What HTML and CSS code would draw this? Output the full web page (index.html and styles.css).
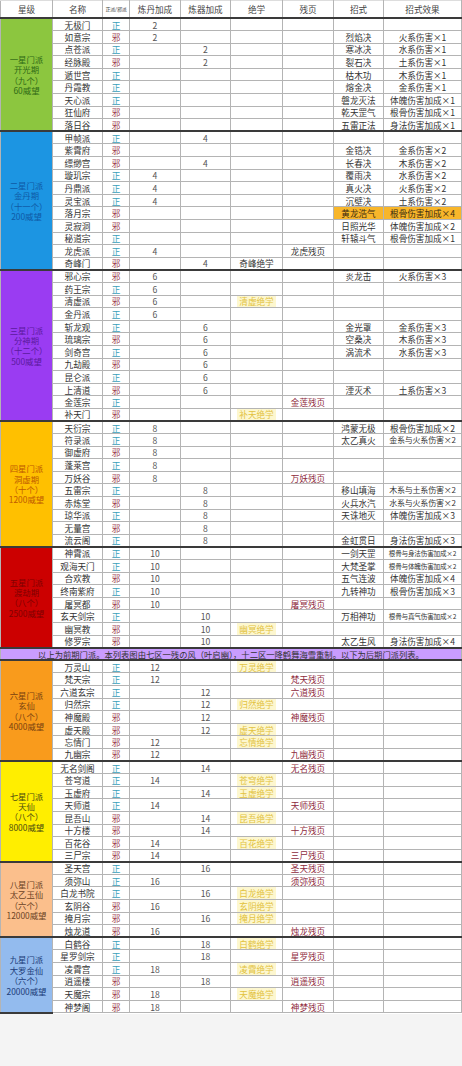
FILE: index.html
```html
<!DOCTYPE html>
<html lang="zh-CN">
<head>
<meta charset="utf-8">
<title>门派列表</title>
<link rel="stylesheet" href="styles.css">
</head>
<body>
<table class="sect">
<colgroup>
<col class="c1"><col class="c2"><col class="c3"><col class="c4"><col class="c5"><col class="c6"><col class="c7"><col class="c8"><col class="c9">
</colgroup>
<thead>
<tr class="head"><th>星级</th><th>名称</th><th class="tiny">正派/邪派</th><th>炼丹加成</th><th>炼器加成</th><th>绝学</th><th>残页</th><th>招式</th><th>招式效果</th></tr>
</thead>
<tbody>
<tr class="g"><td class="lv l1" rowspan="9"><div class="lab">一星门派<br>开光期<br>（九个）<br>60威望</div></td><td>无极门</td><td class="z">正</td><td class="n">2</td><td></td><td></td><td></td><td></td><td></td></tr>
<tr><td>如意宗</td><td class="x">邪</td><td class="n">2</td><td></td><td></td><td></td><td>烈焰决</td><td>火系伤害×1</td></tr>
<tr><td>点苍派</td><td class="z">正</td><td></td><td class="n">2</td><td></td><td></td><td>寒冰决</td><td>水系伤害×1</td></tr>
<tr><td>经脉殿</td><td class="x">邪</td><td></td><td class="n">2</td><td></td><td></td><td>裂石决</td><td>土系伤害×1</td></tr>
<tr><td>遁世宫</td><td class="z">正</td><td></td><td></td><td></td><td></td><td>枯木功</td><td>木系伤害×1</td></tr>
<tr><td>丹霞教</td><td class="z">正</td><td></td><td></td><td></td><td></td><td>熔金决</td><td>金系伤害×1</td></tr>
<tr><td>天心派</td><td class="z">正</td><td></td><td></td><td></td><td></td><td>磐龙灭法</td><td>体魄伤害加成×1</td></tr>
<tr><td>狂仙府</td><td class="x">邪</td><td></td><td></td><td></td><td></td><td>乾天罡气</td><td>根骨伤害加成×1</td></tr>
<tr><td>落日谷</td><td class="x">邪</td><td></td><td></td><td></td><td></td><td>五雷正法</td><td>身法伤害加成×1</td></tr>

<tr class="g"><td class="lv l2" rowspan="11"><div class="lab">二星门派<br>金丹期<br>（十一个）<br>200威望</div></td><td>甲帧派</td><td class="z">正</td><td></td><td class="n">4</td><td></td><td></td><td></td><td></td></tr>
<tr><td>紫霄府</td><td class="x">邪</td><td></td><td></td><td></td><td></td><td>金锆决</td><td>金系伤害×2</td></tr>
<tr><td>缥缈宫</td><td class="x">邪</td><td></td><td class="n">4</td><td></td><td></td><td>长春决</td><td>木系伤害×2</td></tr>
<tr><td>璇玑宗</td><td class="z">正</td><td class="n">4</td><td></td><td></td><td></td><td>覆雨决</td><td>水系伤害×2</td></tr>
<tr><td>丹鼎派</td><td class="z">正</td><td class="n">4</td><td></td><td></td><td></td><td>真火决</td><td>火系伤害×2</td></tr>
<tr><td>灵宝派</td><td class="z">正</td><td class="n">4</td><td></td><td></td><td></td><td>沉壁决</td><td>土系伤害×2</td></tr>
<tr><td>落月宗</td><td class="x">邪</td><td></td><td></td><td></td><td></td><td class="hl">黄龙浩气</td><td class="hl">根骨伤害加成×4</td></tr>
<tr><td>灵寂洞</td><td class="x">邪</td><td></td><td></td><td></td><td></td><td>日照光华</td><td>体魄伤害加成×2</td></tr>
<tr><td>秘道宗</td><td class="z">正</td><td></td><td></td><td></td><td></td><td>轩辕斗气</td><td>根骨伤害加成×1</td></tr>
<tr><td>龙虎派</td><td class="z">正</td><td class="n">4</td><td></td><td></td><td>龙虎残页</td><td></td><td></td></tr>
<tr><td>奇峰门</td><td class="x">邪</td><td></td><td class="n">4</td><td>奇峰绝学</td><td></td><td></td><td></td></tr>

<tr class="g"><td class="lv l3" rowspan="12"><div class="lab">三星门派<br>分神期<br>（十二个）<br>500威望</div></td><td>邪心宗</td><td class="x">邪</td><td class="n">6</td><td></td><td></td><td></td><td>炎龙击</td><td>火系伤害×3</td></tr>
<tr><td>药王宗</td><td class="z">正</td><td class="n">6</td><td></td><td></td><td></td><td></td><td></td></tr>
<tr><td>清虚派</td><td class="x">邪</td><td class="n">6</td><td></td><td><span class="jx">清虚绝学</span></td><td></td><td></td><td></td></tr>
<tr><td>金丹派</td><td class="z">正</td><td class="n">6</td><td></td><td></td><td></td><td></td><td></td></tr>
<tr><td>斩龙观</td><td class="z">正</td><td></td><td class="n">6</td><td></td><td></td><td>金光罩</td><td>金系伤害×3</td></tr>
<tr><td>琉璃宗</td><td class="x">邪</td><td></td><td class="n">6</td><td></td><td></td><td>空桑决</td><td>木系伤害×3</td></tr>
<tr><td>剑奇宫</td><td class="z">正</td><td></td><td class="n">6</td><td></td><td></td><td>涡流术</td><td>水系伤害×3</td></tr>
<tr><td>九劫殿</td><td class="x">邪</td><td></td><td class="n">6</td><td></td><td></td><td></td><td></td></tr>
<tr><td>昆仑派</td><td class="z">正</td><td></td><td class="n">6</td><td></td><td></td><td></td><td></td></tr>
<tr><td>上清道</td><td class="x">邪</td><td></td><td class="n">6</td><td></td><td></td><td>湮灭术</td><td>土系伤害×3</td></tr>
<tr><td>金莲宗</td><td class="z">正</td><td></td><td></td><td></td><td class="cy">金莲残页</td><td></td><td></td></tr>
<tr><td>补天门</td><td class="x">邪</td><td></td><td></td><td><span class="jx">补天绝学</span></td><td></td><td></td><td></td></tr>

<tr class="g"><td class="lv l4" rowspan="10"><div class="lab">四星门派<br>洞虚期<br>（十个）<br>1200威望</div></td><td>天衍宗</td><td class="z">正</td><td class="n">8</td><td></td><td></td><td></td><td>鸿蒙无极</td><td>根骨伤害加成×2</td></tr>
<tr><td>符录派</td><td class="z">正</td><td class="n">8</td><td></td><td></td><td></td><td>太乙真火</td><td class="md">金系与火系伤害×2</td></tr>
<tr><td>御虚府</td><td class="x">邪</td><td class="n">8</td><td></td><td></td><td></td><td></td><td></td></tr>
<tr><td>蓬莱宫</td><td class="z">正</td><td class="n">8</td><td></td><td></td><td></td><td></td><td></td></tr>
<tr><td>万妖谷</td><td class="x">邪</td><td class="n">8</td><td></td><td></td><td class="cy">万妖残页</td><td></td><td></td></tr>
<tr><td>五雷宗</td><td class="z">正</td><td></td><td class="n">8</td><td></td><td></td><td>移山填海</td><td class="md">木系与土系伤害×2</td></tr>
<tr><td>赤炼堂</td><td class="x">邪</td><td></td><td class="n">8</td><td></td><td></td><td>火兵水汽</td><td class="md">水系与火系伤害×2</td></tr>
<tr><td>琼华派</td><td class="z">正</td><td></td><td class="n">8</td><td></td><td></td><td>天诛地灭</td><td>体魄伤害加成×3</td></tr>
<tr><td>无量宫</td><td class="x">邪</td><td></td><td class="n">8</td><td></td><td></td><td></td><td></td></tr>
<tr><td>流云阁</td><td class="z">正</td><td></td><td class="n">8</td><td></td><td></td><td>金虹贯日</td><td>身法伤害加成×3</td></tr>

<tr class="g"><td class="lv l5" rowspan="8"><div class="lab">五星门派<br>渡劫期<br>（八个）<br>2500威望</div></td><td>神霄派</td><td class="z">正</td><td class="n">10</td><td></td><td></td><td></td><td>一剑天罡</td><td class="sm">根骨与身法伤害加成×2</td></tr>
<tr><td>观海天门</td><td class="z">正</td><td class="n">10</td><td></td><td></td><td></td><td>大梵圣掌</td><td class="sm">根骨与体魄伤害加成×2</td></tr>
<tr><td>合欢教</td><td class="x">邪</td><td class="n">10</td><td></td><td></td><td></td><td>五气连波</td><td>体魄伤害加成×4</td></tr>
<tr><td>终南紫府</td><td class="z">正</td><td class="n">10</td><td></td><td></td><td></td><td>九转神功</td><td>根骨伤害加成×3</td></tr>
<tr><td>屠冥都</td><td class="x">邪</td><td class="n">10</td><td></td><td></td><td class="cy">屠冥残页</td><td></td><td></td></tr>
<tr><td>玄天剑宗</td><td class="z">正</td><td></td><td class="n">10</td><td></td><td></td><td>万相神功</td><td class="sm">根骨与真气伤害加成×2</td></tr>
<tr><td>幽冥教</td><td class="x">邪</td><td></td><td class="n">10</td><td><span class="jx">幽冥绝学</span></td><td></td><td></td><td></td></tr>
<tr><td>修罗宗</td><td class="x">邪</td><td></td><td class="n">10</td><td></td><td></td><td>太乙生风</td><td>身法伤害加成×4</td></tr>

<tr class="g note"><td colspan="9">以上为前期门派。本列表图由七区一残の风（叶启幽），十二区一降鹤舞海雪重制。以下为后期门派列表。</td></tr>

<tr class="g"><td class="lv l6" rowspan="8"><div class="lab">六星门派<br>玄仙<br>（八个）<br>4000威望</div></td><td>万灵山</td><td class="z">正</td><td class="n">12</td><td></td><td><span class="jx">万灵绝学</span></td><td></td><td></td><td></td></tr>
<tr><td>梵天宗</td><td class="z">正</td><td class="n">12</td><td></td><td></td><td class="cy">梵天残页</td><td></td><td></td></tr>
<tr><td>六道玄宗</td><td class="z">正</td><td></td><td class="n">12</td><td></td><td class="cy">六道残页</td><td></td><td></td></tr>
<tr><td>归然宗</td><td class="z">正</td><td></td><td class="n">12</td><td><span class="jx">归然绝学</span></td><td></td><td></td><td></td></tr>
<tr><td>神魔殿</td><td class="x">邪</td><td></td><td class="n">12</td><td></td><td class="cy">神魔残页</td><td></td><td></td></tr>
<tr><td>虚天殿</td><td class="x">邪</td><td></td><td class="n">12</td><td><span class="jx">虚天绝学</span></td><td></td><td></td><td></td></tr>
<tr><td>忘情门</td><td class="x">邪</td><td class="n">12</td><td></td><td><span class="jx">忘情绝学</span></td><td></td><td></td><td></td></tr>
<tr><td>九幽宗</td><td class="x">邪</td><td class="n">12</td><td></td><td></td><td class="cy">九幽残页</td><td></td><td></td></tr>

<tr class="g"><td class="lv l7" rowspan="8"><div class="lab">七星门派<br>天仙<br>（八个）<br>8000威望</div></td><td>无名剑阁</td><td class="z">正</td><td></td><td class="n">14</td><td></td><td class="cy">无名残页</td><td></td><td></td></tr>
<tr><td>苍穹道</td><td class="z">正</td><td class="n">14</td><td></td><td><span class="jx">苍穹绝学</span></td><td></td><td></td><td></td></tr>
<tr><td>玉虚府</td><td class="z">正</td><td></td><td class="n">14</td><td><span class="jx">玉虚绝学</span></td><td></td><td></td><td></td></tr>
<tr><td>天师道</td><td class="z">正</td><td class="n">14</td><td></td><td></td><td class="cy">天师残页</td><td></td><td></td></tr>
<tr><td>昆吾山</td><td class="x">邪</td><td></td><td class="n">14</td><td><span class="jx">昆吾绝学</span></td><td></td><td></td><td></td></tr>
<tr><td>十方楼</td><td class="x">邪</td><td></td><td class="n">14</td><td></td><td class="cy">十方残页</td><td></td><td></td></tr>
<tr><td>百花谷</td><td class="x">邪</td><td class="n">14</td><td></td><td><span class="jx">百花绝学</span></td><td></td><td></td><td></td></tr>
<tr><td>三尸宗</td><td class="x">邪</td><td class="n">14</td><td></td><td></td><td class="cy">三尸残页</td><td></td><td></td></tr>

<tr class="g"><td class="lv l8" rowspan="6"><div class="lab">八星门派<br>太乙玉仙<br>（六个）<br>12000威望</div></td><td>圣天宫</td><td class="z">正</td><td></td><td class="n">16</td><td></td><td class="cy">圣天残页</td><td></td><td></td></tr>
<tr><td>须弥山</td><td class="z">正</td><td class="n">16</td><td></td><td></td><td class="cy">须弥残页</td><td></td><td></td></tr>
<tr><td>白龙书院</td><td class="z">正</td><td></td><td class="n">16</td><td><span class="jx">白龙绝学</span></td><td></td><td></td><td></td></tr>
<tr><td>玄阴谷</td><td class="x">邪</td><td class="n">16</td><td></td><td><span class="jx">玄阴绝学</span></td><td></td><td></td><td></td></tr>
<tr><td>掩月宗</td><td class="x">邪</td><td></td><td class="n">16</td><td><span class="jx">掩月绝学</span></td><td></td><td></td><td></td></tr>
<tr><td>烛龙道</td><td class="x">邪</td><td class="n">16</td><td></td><td></td><td class="cy">烛龙残页</td><td></td><td></td></tr>

<tr class="g"><td class="lv l9" rowspan="6"><div class="lab">九星门派<br>大罗金仙<br>（六个）<br>20000威望</div></td><td>白鹤谷</td><td class="z">正</td><td></td><td class="n">18</td><td><span class="jx">白鹤绝学</span></td><td></td><td></td><td></td></tr>
<tr><td>星罗剑宗</td><td class="z">正</td><td></td><td class="n">18</td><td></td><td class="cy">星罗残页</td><td></td><td></td></tr>
<tr><td>凌霄宫</td><td class="z">正</td><td class="n">18</td><td></td><td><span class="jx">凌霄绝学</span></td><td></td><td></td><td></td></tr>
<tr><td>逍遥楼</td><td class="x">邪</td><td></td><td class="n">18</td><td></td><td class="cy">逍遥残页</td><td></td><td></td></tr>
<tr><td>天魔宗</td><td class="x">邪</td><td class="n">18</td><td></td><td><span class="jx">天魔绝学</span></td><td></td><td></td><td></td></tr>
<tr><td>神梦阁</td><td class="x">邪</td><td class="n">18</td><td></td><td></td><td class="cy">神梦残页</td><td></td><td></td></tr>
</tbody>
</table>
</body>
</html>
```

FILE: styles.css
```css
html, body {
  margin: 0;
  padding: 0;
  background: #f4f4f4;
}

body {
  font-family: "Noto Sans CJK SC", "Noto Sans", sans-serif;
  color: #333;
}

.sect {
  border-collapse: collapse;
  table-layout: fixed;
  width: 461px;
  background: #fff;
  font-size: 8.6px;
}

.c1 { width: 52px; }
.c2 { width: 50px; }
.c3 { width: 27px; }
.c4 { width: 51px; }
.c5 { width: 50px; }
.c6 { width: 52px; }
.c7 { width: 51px; }
.c8 { width: 50px; }
.c9 { width: 78px; }

.sect th,
.sect td {
  padding: 0;
  border: 1px solid #b4b4b4;
  text-align: center;
  vertical-align: middle;
  line-height: 10px;
  white-space: nowrap;
  overflow: hidden;
}

.sect th {
  font-weight: normal;
  height: 16px;
  border-top-color: #ddd;
  color: #444;
}

.sect th.tiny {
  font-size: 5px;
  letter-spacing: -0.2px;
}

.sect tbody tr {
  height: 12.6px;
}

.sect tr.g td {
  border-top: 2px solid #3a3a3a;
}

.sect td.lv {
  white-space: normal;
  border-bottom: 2px solid #3a3a3a;
}

.lab {
  display: flex;
  flex-direction: column;
  align-items: center;
  font-size: 8.4px;
  line-height: 10.4px;
}

.l1 { background: #8cc63f; color: #2f6a16; }
.l2 { background: #1c95e2; color: #0f5aa6; }
.l3 { background: #9a3cf2; color: #5a1a9e; }
.l4 { background: #ffc000; color: #c05a00; }
.l5 { background: #cc0000; color: #7e0000; }
.l6 { background: #f99b1c; color: #7a4210; }
.l7 { background: #ffee00; color: #4a4a10; }
.l8 { background: #fbbf8c; color: #6b4325; }
.l9 { background: #93bbee; color: #1b3c78; }

.z { color: #3a9fba; }
.x { color: #a0404e; }
.n { color: #555; }
.cy { color: #8e2a3c; }

.jx {
  color: #e2c23e;
  background: #fdf7cf;
  padding: 0 2px;
}

.hl {
  background: #f8b62a;
  color: #3a2a10;
}

.md {
  font-size: 8px;
  letter-spacing: -0.2px;
}

.sm {
  font-size: 6.6px;
  letter-spacing: -0.2px;
}

.note td {
  background: #c99cff;
  color: #333;
  font-size: 8.3px;
  border-bottom: 2px solid #3a3a3a;
}
```
